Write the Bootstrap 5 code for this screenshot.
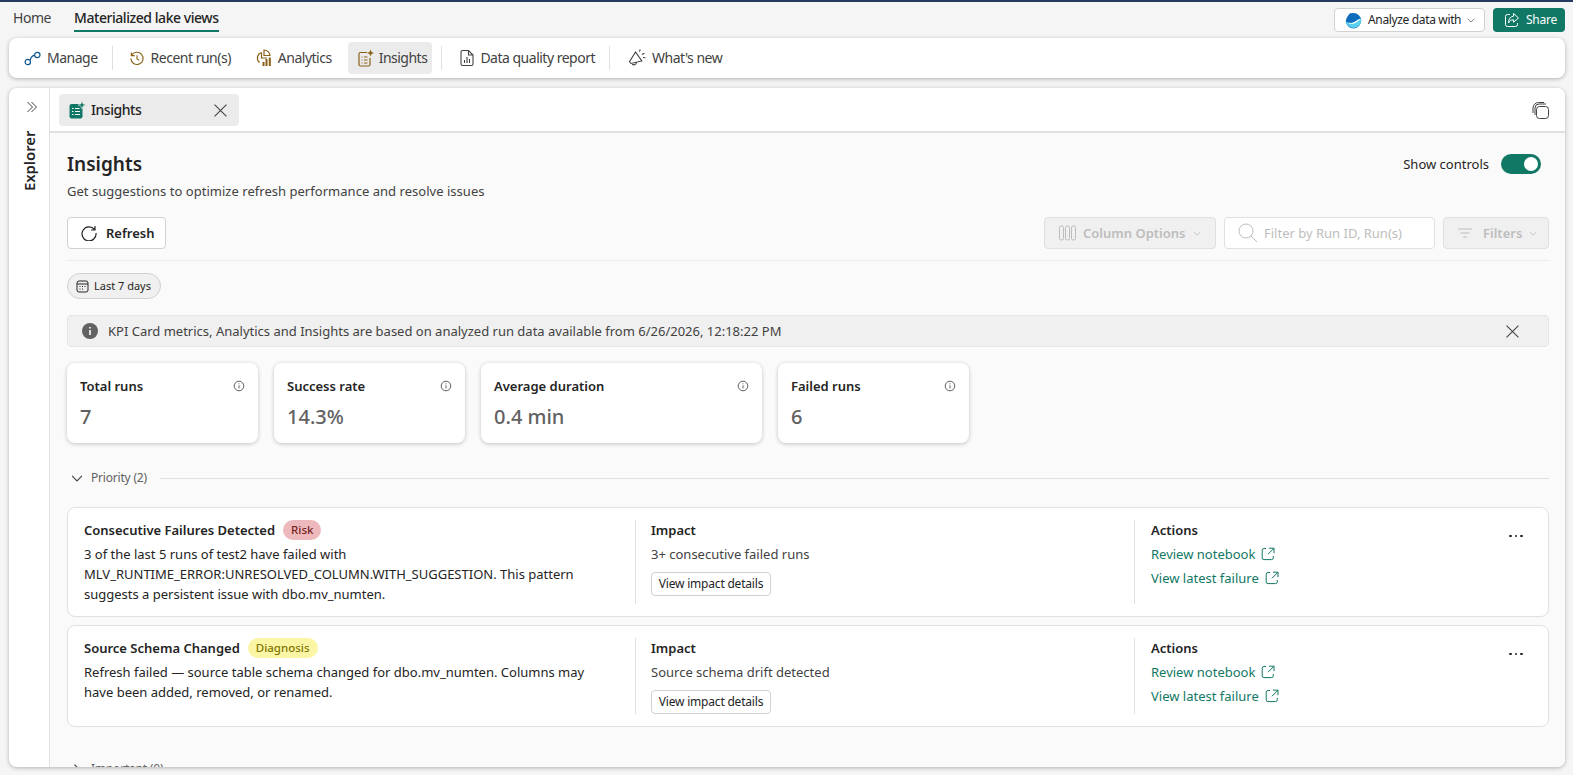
<!DOCTYPE html>
<html lang="en">
<head>
<meta charset="utf-8">
<title>Insights</title>
<link href="https://cdn.jsdelivr.net/npm/bootstrap@5.3.0/dist/css/bootstrap.min.css" rel="stylesheet">
<style>
html,body{height:775px;overflow:hidden}
body{background:#f5f5f5;font-family:"Noto Sans","Open Sans",sans-serif;font-size:13px;color:#242424;line-height:20px;letter-spacing:0;border-top:2px solid #243a5e}
.ic{display:block;flex:none;fill:none;stroke:currentColor;stroke-width:1}
.topbar{height:36px;padding:0 8px 0 13px}
.tabname{height:30px;line-height:32px;font-size:14px;margin-right:23px;color:#424242;letter-spacing:-.45px}
.tabname.on{color:#242424;font-weight:500;border-bottom:2px solid #117865;height:29px;margin-top:1px;line-height:30px}
.analyze{width:151px;height:24px;background:#fff;border:1px solid #d1d1d1;border-radius:4px;font-size:12px;margin-right:8px;padding-left:10px;letter-spacing:-.35px;gap:6px}
.sharebtn{width:72px;height:24px;background:#117865;color:#fff;border-radius:4px;font-size:12px;padding-left:11px;gap:6px;letter-spacing:-.25px}
.ribbon{height:40px;margin:0 8px 10px 9px;background:#fff;border-radius:8px;box-shadow:0 1px 4px rgba(0,0,0,.28);padding-left:15px}
.ribitem{height:32px;font-size:14px;color:#424242;gap:6px;letter-spacing:-.5px}
.ribitem.gap-a{margin-left:25px}
.ribitem.on{background:#ebebeb;border-radius:4px;padding:0 5px 0 10px;margin-left:16px;gap:5px}
.ribsep{width:1px;height:24px;background:#e0e0e0;margin:0 16px 0 14px}
.ribsep.close-a{margin:0 18px 0 9px}
.ribsep.wide{margin-right:18px}
.shell{height:679px;margin:0 8px 0 9px;background:#fff;border-radius:8px;box-shadow:0 1px 4px rgba(0,0,0,.28);overflow:hidden}
.rail{width:41px;flex:none;border-right:1px solid #e0e0e0;padding-top:13px;color:#424242}
.railchev{margin-left:6px}
.railtext{writing-mode:vertical-rl;transform:rotate(180deg);font-size:15px;font-weight:600;color:#242424;margin-top:16px;line-height:20px;height:62px;text-align:left;letter-spacing:-.1px}
.strip{height:45px;background:#fff;border-bottom:2px solid #e0e0e0;padding:6px 15px 0 9px}
.doc{width:180px;height:32px;background:#ebebeb;border-radius:4px;padding:0 12px 0 10px;font-size:14px;gap:5px;font-weight:500;letter-spacing:-.45px}
.copyic{color:#424242;margin-top:8px}
.pane{background:#fafafa;padding:17px 16px 0 17px;height:634px;overflow:hidden}
.heading{font-size:19px;font-weight:600;line-height:28px;margin:0}
.sub{color:#424242;margin-top:3px;letter-spacing:.03px}
.showctl{margin-right:8px;margin-top:4px;gap:12px}
.toggle{width:40px;height:20px;border-radius:10px;background:#117865;padding:3px}
.toggle i{display:block;width:14px;height:14px;border-radius:50%;background:#fff;margin-left:auto}
.tools{margin-top:16px;padding-bottom:11px;border-bottom:1px solid #ebebeb;height:44px}
.refresh{width:99px;height:32px;background:#fff;border:1px solid #d1d1d1;border-radius:4px;font-weight:600;gap:9px;padding-left:13px;color:#242424}
.dis{height:32px;background:#f0f0f0;border:1px solid #e0e0e0;border-radius:4px;color:#bdbdbd;font-weight:600;padding-left:14px}
.dis-col{width:172px;gap:7px}
.dis-fil{width:106px;gap:11px}
.chev-tight{margin-left:-4px}
.filterbox{height:32px;width:211px;background:#fff;border:1px solid #e0e0e0;border-radius:4px;color:#bdbdbd;padding-left:13px;gap:6px;margin:0 8px}
.chip{margin-top:12px;width:94px;height:26px;border:1px solid #d1d1d1;background:#f0f0f0;border-radius:13px;font-size:11px;padding-left:8px;gap:5px}
.notice{margin-top:16px;height:32px;background:#f0f0f0;border:1px solid #e6e6e6;border-radius:4px;padding:0 29px 0 14px;gap:10px;color:#424242}
.kpis{margin-top:16px;gap:16px}
.kpi{height:80px;background:#fff;border-radius:8px;box-shadow:0 1px 4px rgba(0,0,0,.22);padding:13px 13px 0 13px}
.kpi-name{font-weight:600}
.kpi-val{font-size:20px;font-weight:500;color:#616161;line-height:26px;margin-top:8px}
.w191{width:191px}.w281{width:281px}
.group{margin-top:25px;height:20px;color:#616161;font-size:12px;gap:8px;padding-left:4px;letter-spacing:-.2px}
.group u{display:block;flex:1;height:1px;background:#e0e0e0;margin-left:5px;text-decoration:none}
.grp-next{margin-top:32px}
.chv{color:#424242}
.chv-r{transform:rotate(-90deg)}
.groupgap{margin-top:19px}
.insight{background:#fff;border:1px solid #e0e0e0;border-radius:8px;padding:12px 16px;margin-bottom:8px}
.c1{flex:0 0 552px;border-right:1px solid #e0e0e0;padding-right:27px}
.c2{flex:0 0 499px;border-right:1px solid #e0e0e0;padding-left:15px}
.c3{flex:1;padding-left:16px}
.ttl{font-weight:600;color:#242424;height:20px}
.pill{height:20px;border-radius:10px;padding:0 8px;font-size:11.5px;font-weight:500;line-height:20px;margin-left:8px}
.pill-r{background:#eeb9bc;color:#751d1f}
.pill-y{background:#fbf6a6;color:#817400}
.desc{margin-top:4px;color:#242424}
.impact-txt{margin-top:4px;color:#424242}
.detail{display:block;margin-top:8px;width:120px;height:24px;background:#fff;border:1px solid #d1d1d1;border-radius:4px;font-size:12px;line-height:22px;text-align:center;color:#242424;text-decoration:none;letter-spacing:-.2px}
.lnk{color:#117865;text-decoration:none;gap:6px;height:20px;margin-top:4px}
.dots{margin-top:14px;width:15px;height:4px;margin-right:8px;gap:3px}
.dots i{display:block;width:2.6px;height:2.6px;border-radius:50%;background:#242424}
.muted-ic{color:#616161}
.dark-ic{color:#424242}
.blue-ic{color:#0f548c}
.gold-ic{color:#8a6116}
</style>
</head>
<body>
<svg width="0" height="0" class="position-absolute">
 <symbol id="ext" viewBox="0 0 14 14"><path d="M5 1.500H3A1.800 1.800 0 0 0 1.200 3.300v7.500A1.800 1.800 0 0 0 3 12.600h7.500a1.800 1.800 0 0 0 1.800-1.800V9M8 1.200h5v5M13 1.200 7 7.200" fill="none" stroke="currentColor"/></symbol>
 <symbol id="info" viewBox="0 0 12 12"><circle cx="6" cy="6" r="4.800" fill="none" stroke="currentColor"/><path d="M6 5.400v3M6 3.400v.9" stroke="currentColor" fill="none"/></symbol>
 <symbol id="chev" viewBox="0 0 10 6"><path d="M.8.8 5 5 9.200.8" fill="none" stroke="currentColor"/></symbol>
 <symbol id="close" viewBox="0 0 12 12"><path d="M.5.5l11 11M11.500.5l-11 11" fill="none" stroke="currentColor"/></symbol>
</svg>

<div class="topbar d-flex align-items-start justify-content-between">
  <div class="d-flex">
    <div class="tabname">Home</div>
    <div class="tabname on">Materialized lake views</div>
  </div>
  <div class="d-flex pt-1 mt-1 position-relative" style="top:-2px">
    <div class="analyze d-flex align-items-center">
      <svg width="17" height="17" viewBox="0 0 17 17"><path d="M5 1.200 8.500 1A7.700 7.700 0 1 1 .8 9.200C1 6 3 3.500 5 1.200z" fill="#0f6cbd"/><path d="M.9 9.500c3.500 2 8 1.500 11-1.500 1.500-1.300 3-1.500 4.300-1.300A7.700 7.700 0 0 1 .9 9.500z" fill="#5ccfee"/><path d="M1.500 10.500c3.500 1.200 7.500.5 10.500-2 1.200-1 2.700-1.600 4-1.600-1.500 1-3 2-4.500 3.300-3 2.300-6.500 2-10 .3z" fill="#fff"/></svg>
      <span>Analyze data with</span>
      <svg width="8" height="5" class="muted-ic"><use href="#chev"/></svg>
    </div>
    <div class="sharebtn d-flex align-items-center">
      <svg class="ic" width="16" height="16" viewBox="0 0 16 16"><path d="M6 2.500H3.500A2 2 0 0 0 1.500 4.500v8a2 2 0 0 0 2 2h8a2 2 0 0 0 2-2V11M9.500 1.500l5 4.500-5 4.200V7.800C7 7.800 5.300 9 4.500 11c0-4 2-6.500 5-6.800z"/></svg>
      <span>Share</span>
    </div>
  </div>
</div>

<div class="ribbon d-flex align-items-center">
  <div class="ribitem d-flex align-items-center">
    <svg class="ic blue-ic" width="17" height="15" viewBox="0 0 17 15" stroke-width="1.200"><circle cx="3.800" cy="11" r="2.700" stroke-width="1.200"/><circle cx="13.300" cy="4" r="2.700" stroke-width="1.200"/><path d="M6 9.500c1-3.500 2.500-5 4.700-5.300" stroke-width="1.200"/></svg>
    <span>Manage</span>
  </div>
  <div class="ribsep"></div>
  <div class="ribitem d-flex align-items-center">
    <svg class="ic gold-ic" width="16" height="17" viewBox="0 0 17 17"><path d="M2.800 5.200A6.500 6.500 0 1 1 2 8.500M2.500 2v3.500H6M8.500 5v4l2.500 1.500" stroke-width="1.200"/></svg>
    <span>Recent run(s)</span>
  </div>
  <div class="ribitem gap-a d-flex align-items-center">
    <svg class="ic gold-ic" width="16" height="18" viewBox="0 0 16 18"><path d="M5.500 3.500A5.800 5.800 0 0 0 3.500 13.500M8 1v5.500h6A6 6 0 0 0 8 1zM5.500 3.500v5.500H11" stroke-width="1.200"/><path d="M7.500 17v-4M10.500 17v-7M13.800 17V8.500" stroke-width="2"/></svg>
    <span>Analytics</span>
  </div>
  <div class="ribitem on d-flex align-items-center">
    <svg class="ic gold-ic" width="16" height="18" viewBox="0 0 16 18"><path d="M9 3.500H2.500A1.500 1.500 0 0 0 1 5v10.500A1.500 1.500 0 0 0 2.500 17h8a1.500 1.500 0 0 0 1.500-1.500V9M3.500 8h1M6 8h3.500M3.500 11h1M6 11h3.500M3.500 14h1M6 14h3.500" stroke-width="1.200"/><path d="M12.500 .5l1 2.500 2.500 1-2.500 1-1 2.500-1-2.500-2.500-1 2.500-1z" fill="currentColor" stroke="none"/></svg>
    <span>Insights</span>
  </div>
  <div class="ribsep close-a"></div>
  <div class="ribitem d-flex align-items-center">
    <svg class="ic" width="14" height="18" viewBox="0 0 14 18"><path d="M8.500 1.500H2.500A1.500 1.500 0 0 0 1 3v12A1.500 1.500 0 0 0 2.500 16.500h9A1.500 1.500 0 0 0 13 15V6zM8.500 1.500V6H13M4.500 14V11M7 14V8M9.500 14v-4" stroke-width="1.100"/></svg>
    <span>Data quality report</span>
  </div>
  <div class="ribsep wide"></div>
  <div class="ribitem d-flex align-items-center">
    <svg class="ic" width="18" height="18" viewBox="0 0 18 18"><path d="M7.500 3 1.500 12.800l1.500 1.700 10.800-2.500zM4 14.300c.3 2 3.500 2.500 4.500-.7M11.500 2.500l.7-2M14 5.500l2.500-1.300M15 8.500l2.500.3" stroke-width="1.100"/></svg>
    <span>What's new</span>
  </div>
</div>

<div class="shell d-flex">
  <div class="rail d-flex flex-column align-items-center">
    <svg class="ic railchev" width="12" height="12" viewBox="0 0 12 12"><path d="M1.500 1 6.500 6l-5 5M5.500 1l5 5-5 5"/></svg>
    <div class="railtext">Explorer</div>
  </div>
  <div class="flex-grow-1 overflow-hidden">
    <div class="strip d-flex justify-content-between">
      <div class="doc d-flex align-items-center">
        <svg width="17" height="18" viewBox="0 0 17 18"><rect x="0.500" y="3" width="13" height="14.500" rx="2" fill="#117865"/><path d="M3 7.500h1.500M6 7.500h4.500M3 10.500h1.500M6 10.500h5M3 13.500h1.500M6 13.500h5" stroke="#fff" stroke-width="1.200" fill="none"/><path d="M13 0l1.100 2.900L17 4l-2.900 1.100L13 8l-1.100-2.900L9 4l2.900-1.100z" fill="#117865" stroke="#ebebeb" stroke-width=".6"/></svg>
        <span class="flex-grow-1">Insights</span>
        <svg width="13" height="13" class="dark-ic"><use href="#close"/></svg>
      </div>
      <svg class="ic copyic" width="18" height="18" viewBox="0 0 18 18"><rect x="4.500" y="4.500" width="12" height="12" rx="3"/><path d="M3 13V6a4 4 0 0 1 4-4h7M1 11V6a5.500 5.500 0 0 1 5.500-5.500H12"/></svg>
    </div>
    <div class="pane">
      <div class="d-flex justify-content-between">
        <div>
          <h1 class="heading">Insights</h1>
          <div class="sub">Get suggestions to optimize refresh performance and resolve issues</div>
        </div>
        <div class="showctl d-flex align-items-start">
          <span>Show controls</span>
          <div class="toggle"><i></i></div>
        </div>
      </div>

      <div class="tools d-flex justify-content-between">
        <div class="refresh d-flex align-items-center">
          <svg class="ic" width="16" height="16" viewBox="0 0 16 16"><path d="M13.500 4.500A7 7 0 1 0 15 8M14 1v4h-4" stroke-width="1.200"/></svg>
          <span>Refresh</span>
        </div>
        <div class="d-flex">
          <div class="dis dis-col d-flex align-items-center">
            <svg class="ic" width="17" height="16" viewBox="0 0 17 16"><rect x=".5" y="1" width="4" height="14" rx="1.500"/><rect x="6.500" y="1" width="4" height="14" rx="1.500"/><rect x="12.500" y="1" width="4" height="14" rx="1.500"/></svg>
            <span>Column Options</span>
            <svg width="8" height="5"><use href="#chev"/></svg>
          </div>
          <div class="filterbox d-flex align-items-center">
            <svg class="ic" width="20" height="20" viewBox="0 0 20 20"><circle cx="8" cy="8" r="7"/><path d="M13 13l6 6"/></svg>
            <span>Filter by Run ID, Run(s)</span>
          </div>
          <div class="dis dis-fil d-flex align-items-center">
            <svg class="ic" width="14" height="10" viewBox="0 0 14 10"><path d="M0 1h14M2.500 5h9M5 9h4"/></svg>
            <span>Filters</span>
            <svg width="8" height="5" class="chev-tight"><use href="#chev"/></svg>
          </div>
        </div>
      </div>

      <div class="chip d-flex align-items-center">
        <svg class="ic" width="13" height="13" viewBox="0 0 13 13"><rect x="1" y="1" width="11" height="11" rx="2"/><path d="M1 4h11M3.500 6.500h1M6 6.500h1M8.500 6.500h1M3.500 9h1M6 9h1"/></svg>
        <span>Last 7 days</span>
      </div>

      <div class="notice d-flex align-items-center">
        <svg width="16" height="16" viewBox="0 0 16 16"><circle cx="8" cy="8" r="8" fill="#616161"/><path d="M8 7v5M8 4v1.600" stroke="#fff" stroke-width="1.600" fill="none"/></svg>
        <span class="flex-grow-1">KPI Card metrics, Analytics and Insights are based on analyzed run data available from 6/26/2026, 12:18:22 PM</span>
        <svg width="13" height="13" class="dark-ic"><use href="#close"/></svg>
      </div>

      <div class="kpis d-flex">
        <div class="kpi w191">
          <div class="d-flex justify-content-between align-items-center"><span class="kpi-name">Total runs</span><svg width="12" height="12" class="muted-ic"><use href="#info"/></svg></div>
          <div class="kpi-val">7</div>
        </div>
        <div class="kpi w191">
          <div class="d-flex justify-content-between align-items-center"><span class="kpi-name">Success rate</span><svg width="12" height="12" class="muted-ic"><use href="#info"/></svg></div>
          <div class="kpi-val">14.3%</div>
        </div>
        <div class="kpi w281">
          <div class="d-flex justify-content-between align-items-center"><span class="kpi-name">Average duration</span><svg width="12" height="12" class="muted-ic"><use href="#info"/></svg></div>
          <div class="kpi-val">0.4 min</div>
        </div>
        <div class="kpi w191">
          <div class="d-flex justify-content-between align-items-center"><span class="kpi-name">Failed runs</span><svg width="12" height="12" class="muted-ic"><use href="#info"/></svg></div>
          <div class="kpi-val">6</div>
        </div>
      </div>

      <div class="group d-flex align-items-center">
        <svg width="12" height="7" viewBox="0 0 10 6" class="chv"><use href="#chev"/></svg>
        <span>Priority (2)</span>
        <u></u>
      </div>

      <div class="groupgap"></div>

      <div class="insight d-flex">
        <div class="c1">
          <div class="ttl d-flex align-items-center"><span>Consecutive Failures Detected</span><span class="pill pill-r">Risk</span></div>
          <div class="desc">3 of the last 5 runs of test2 have failed with MLV_RUNTIME_ERROR:UNRESOLVED_COLUMN.WITH_SUGGESTION. This pattern suggests a persistent issue with dbo.mv_numten.</div>
        </div>
        <div class="c2">
          <div class="ttl">Impact</div>
          <div class="impact-txt">3+ consecutive failed runs</div>
          <a class="detail" href="#">View impact details</a>
        </div>
        <div class="c3">
          <div class="ttl">Actions</div>
          <a class="lnk d-flex align-items-center" href="#"><span>Review notebook</span><svg width="14" height="14"><use href="#ext"/></svg></a>
          <a class="lnk d-flex align-items-center" href="#"><span>View latest failure</span><svg width="14" height="14"><use href="#ext"/></svg></a>
        </div>
        <div class="dots d-flex align-items-center"><i></i><i></i><i></i></div>
      </div>

      <div class="insight d-flex">
        <div class="c1">
          <div class="ttl d-flex align-items-center"><span>Source Schema Changed</span><span class="pill pill-y">Diagnosis</span></div>
          <div class="desc">Refresh failed — source table schema changed for dbo.mv_numten. Columns may have been added, removed, or renamed.</div>
        </div>
        <div class="c2">
          <div class="ttl">Impact</div>
          <div class="impact-txt">Source schema drift detected</div>
          <a class="detail" href="#">View impact details</a>
        </div>
        <div class="c3">
          <div class="ttl">Actions</div>
          <a class="lnk d-flex align-items-center" href="#"><span>Review notebook</span><svg width="14" height="14"><use href="#ext"/></svg></a>
          <a class="lnk d-flex align-items-center" href="#"><span>View latest failure</span><svg width="14" height="14"><use href="#ext"/></svg></a>
        </div>
        <div class="dots d-flex align-items-center"><i></i><i></i><i></i></div>
      </div>

      <div class="group grp-next d-flex align-items-center">
        <svg width="12" height="7" viewBox="0 0 10 6" class="chv chv-r"><use href="#chev"/></svg>
        <span>Important (0)</span>
      </div>
    </div>
  </div>
</div>
</body>
</html>
